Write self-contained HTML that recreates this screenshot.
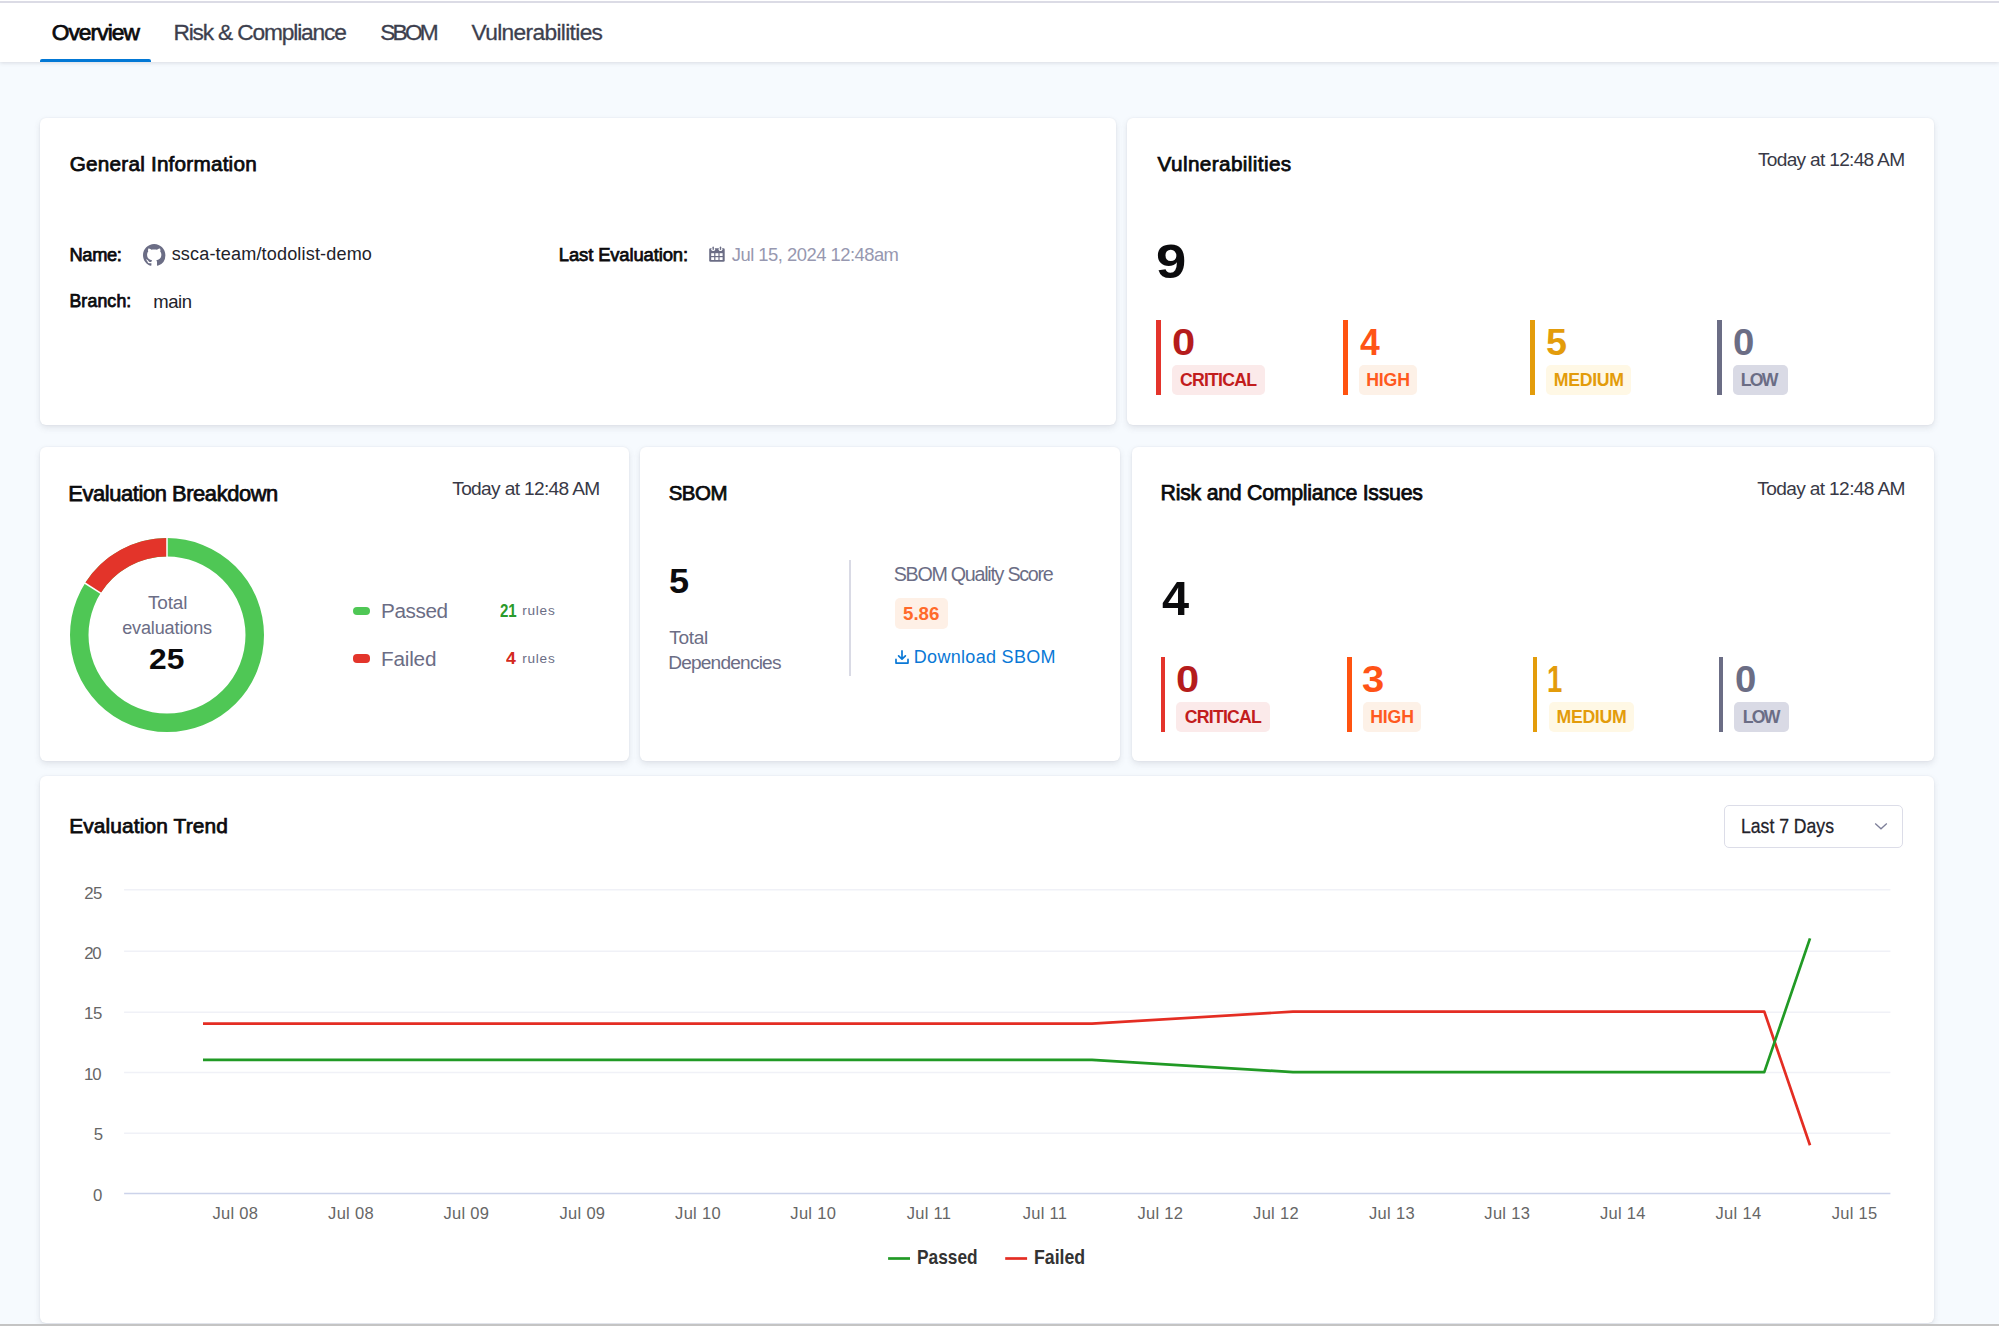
<!DOCTYPE html>
<html><head><meta charset="utf-8">
<style>
html,body{margin:0;padding:0}
body{width:1999px;height:1326px;overflow:hidden;position:relative;background:#f6fafe;font-family:"Liberation Sans",sans-serif}
.t{position:absolute;white-space:pre;line-height:1;font-family:"Liberation Sans",sans-serif}
.card{position:absolute;background:#fff;border-radius:6px;box-shadow:0 0 2px rgba(40,41,61,.08),0 3px 6px rgba(96,97,112,.14)}
.abs{position:absolute}
svg{position:absolute;overflow:visible}
</style></head>
<body>
<div class="abs" style="left:0;top:0;width:1999px;height:62px;background:#fff;box-shadow:0 1px 4px rgba(96,97,112,.2)"></div>
<div class="abs" style="left:0;top:1px;width:1999px;height:2px;background:#dbdbe5"></div>
<div class="abs" style="left:40.3px;top:59px;width:111px;height:3px;background:#0278d5;border-radius:2px 2px 0 0"></div>

<div class="card" style="left:40px;top:118px;width:1076px;height:306.5px"></div>
<div class="card" style="left:1127px;top:118px;width:807px;height:306.5px"></div>
<div class="card" style="left:40px;top:446.5px;width:589px;height:314.5px"></div>
<div class="card" style="left:640px;top:446.5px;width:480px;height:314.5px"></div>
<div class="card" style="left:1132px;top:446.5px;width:802px;height:314.5px"></div>
<div class="card" style="left:40px;top:775.5px;width:1894px;height:547.5px"></div>

<!-- github icon -->
<svg style="left:143.4px;top:243.6px" width="22.4" height="22.4" viewBox="0 0 16 16"><path fill="#6b6d85" d="M8 0C3.58 0 0 3.58 0 8c0 3.54 2.29 6.53 5.47 7.59.4.07.55-.17.55-.38 0-.19-.01-.82-.01-1.49-2.01.37-2.53-.49-2.69-.94-.09-.23-.48-.94-.82-1.13-.28-.15-.68-.52-.01-.53.63-.01 1.08.58 1.23.82.72 1.21 1.87.87 2.33.66.07-.52.28-.87.51-1.07-1.78-.2-3.64-.89-3.64-3.95 0-.87.31-1.59.82-2.15-.08-.2-.36-1.02.08-2.12 0 0 .67-.21 2.2.82.64-.18 1.32-.27 2-.27.68 0 1.36.09 2 .27 1.53-1.04 2.2-.82 2.2-.82.44 1.1.16 1.92.08 2.12.51.56.82 1.27.82 2.15 0 3.07-1.87 3.75-3.65 3.95.29.25.54.73.54 1.48 0 1.07-.01 1.93-.01 2.2 0 .21.15.46.55.38A8.013 8.013 0 0016 8c0-4.42-3.58-8-8-8z"/></svg>

<!-- calendar icon -->
<svg style="left:709.3px;top:246.1px" width="16" height="16" viewBox="0 0 16 16">
<rect x="0.2" y="2.3" width="15.5" height="13.5" rx="1.3" fill="#6b6d85"/>
<circle cx="4.2" cy="3.2" r="1.9" fill="#fff"/><circle cx="11.5" cy="3.2" r="1.9" fill="#fff"/>
<rect x="3.5" y="0.6" width="1.4" height="3.4" rx="0.7" fill="#6b6d85"/><rect x="10.8" y="0.6" width="1.4" height="3.4" rx="0.7" fill="#6b6d85"/>
<rect x="2.2" y="7.2" width="3" height="2.8" fill="#fff"/><rect x="6.4" y="7.2" width="3" height="2.8" fill="#fff"/><rect x="10.6" y="7.2" width="3" height="2.8" fill="#fff"/>
<rect x="2.2" y="11.2" width="3" height="2.8" fill="#fff"/><rect x="6.4" y="11.2" width="3" height="2.8" fill="#fff"/><rect x="10.6" y="11.2" width="3" height="2.8" fill="#fff"/>
</svg>

<!-- donut -->
<svg style="left:0;top:0" width="1999" height="1326">
<circle cx="167" cy="635.1" r="87.75" fill="none" stroke="#4fc755" stroke-width="18.5"/>
<path d="M 92.93 588.08 A 87.75 87.75 0 0 1 167 547.35" fill="none" stroke="#e3342a" stroke-width="18.5"/>
<line x1="167" y1="536.6" x2="167" y2="557.6" stroke="#fff" stroke-width="1.5"/>
<line x1="83.2" y1="582" x2="101" y2="593.3" stroke="#fff" stroke-width="1.5"/>
</svg>

<!-- legend pills -->
<div class="abs" style="left:353.2px;top:607px;width:17.1px;height:8.1px;border-radius:4px;background:#4fc755"></div>
<div class="abs" style="left:353.2px;top:654.4px;width:17.1px;height:8.3px;border-radius:4px;background:#e3352b"></div>

<!-- sbom divider -->
<div class="abs" style="left:849px;top:559.6px;width:1.5px;height:116.3px;background:#d9dae5"></div>
<div class="abs" style="left:895.1px;top:598.3px;width:52.8px;height:30.9px;border-radius:5px;background:#fef0e6"></div>
<svg style="left:895px;top:650px" width="15" height="15" viewBox="0 0 15 15">
<path d="M7 0.9V9M3.6 5.8L7 9.1L10.4 5.8" fill="none" stroke="#0a78d6" stroke-width="1.7" stroke-linecap="round" stroke-linejoin="round"/>
<path d="M1 9.4V13.1H13V9.4" fill="none" stroke="#0a78d6" stroke-width="1.7" stroke-linecap="round" stroke-linejoin="round"/>
</svg>

<!-- dropdown -->
<div class="abs" style="left:1723.5px;top:804.7px;width:177.4px;height:41.1px;border:1.5px solid #dcdde8;border-radius:5px;background:#fff"></div>
<svg style="left:1874px;top:822px" width="14" height="9" viewBox="0 0 14 9"><path d="M1.2 1.5L7 6.8L12.8 1.5" fill="none" stroke="#7d7f99" stroke-width="1.3"/></svg>

<!-- chart -->
<svg style="left:0;top:0" width="1999" height="1326">
<g stroke="#f0f1f7" stroke-width="1.5">
<line x1="124.1" y1="889.7" x2="1890.4" y2="889.7"/>
<line x1="124.1" y1="951.3" x2="1890.4" y2="951.3"/>
<line x1="124.1" y1="1012.3" x2="1890.4" y2="1012.3"/>
<line x1="124.1" y1="1072.5" x2="1890.4" y2="1072.5"/>
<line x1="124.1" y1="1133.3" x2="1890.4" y2="1133.3"/>
</g>
<line x1="124.1" y1="1193.5" x2="1890.4" y2="1193.5" stroke="#ccd3ea" stroke-width="1.5"/>
<polyline points="203,1023.7 1092,1023.7 1293,1011.6 1764.3,1011.6 1810,1145.2" fill="none" stroke="#e42d23" stroke-width="2.7" stroke-linejoin="round"/>
<polyline points="203,1059.9 1092,1059.9 1293,1072.1 1764.3,1072.1 1810,938.4" fill="none" stroke="#219a25" stroke-width="2.7" stroke-linejoin="round"/>
<line x1="888.1" y1="1258.5" x2="910" y2="1258.5" stroke="#219a25" stroke-width="2.7"/>
<line x1="1005.2" y1="1258.5" x2="1027.1" y2="1258.5" stroke="#e42d23" stroke-width="2.7"/>
</svg>

<div class="abs" style="left:0;top:1323.5px;width:1999px;height:2.5px;background:#c4c4c4"></div>

<div style="position:absolute;left:1156.0px;top:320.0px;width:4.5px;height:75px;background:#e4342b"></div>
<div style="position:absolute;left:1171.5px;top:365.0px;width:93.7px;height:30px;background:#fbeaea;border-radius:5px"></div>
<div style="position:absolute;left:1343.0px;top:320.0px;width:4.5px;height:75px;background:#ff5310"></div>
<div style="position:absolute;left:1359.0px;top:365.0px;width:58.0px;height:30px;background:#fdf1e7;border-radius:5px"></div>
<div style="position:absolute;left:1530.2px;top:320.0px;width:4.5px;height:75px;background:#e39c0b"></div>
<div style="position:absolute;left:1546.3px;top:365.0px;width:85.1px;height:30px;background:#fff8e5;border-radius:5px"></div>
<div style="position:absolute;left:1717.0px;top:320.0px;width:4.5px;height:75px;background:#6b6d85"></div>
<div style="position:absolute;left:1732.8px;top:365.0px;width:55.1px;height:30px;background:#d9dae5;border-radius:5px"></div>
<div style="position:absolute;left:1160.5px;top:657.0px;width:4.5px;height:75px;background:#e4342b"></div>
<div style="position:absolute;left:1176.0px;top:702.0px;width:93.7px;height:30px;background:#fbeaea;border-radius:5px"></div>
<div style="position:absolute;left:1347.0px;top:657.0px;width:4.5px;height:75px;background:#ff5310"></div>
<div style="position:absolute;left:1363.0px;top:702.0px;width:58.0px;height:30px;background:#fdf1e7;border-radius:5px"></div>
<div style="position:absolute;left:1532.5px;top:657.0px;width:4.5px;height:75px;background:#e39c0b"></div>
<div style="position:absolute;left:1548.6px;top:702.0px;width:85.1px;height:30px;background:#fff8e5;border-radius:5px"></div>
<div style="position:absolute;left:1718.5px;top:657.0px;width:4.5px;height:75px;background:#6b6d85"></div>
<div style="position:absolute;left:1734.3px;top:702.0px;width:55.1px;height:30px;background:#d9dae5;border-radius:5px"></div>
<span class="t" style="left:51.69px;top:21.49px;font-size:22.73px;font-weight:400;color:#0b0b0d;letter-spacing:-0.927px;-webkit-text-stroke:0.75px #0b0b0d">Overview</span>
<span class="t" style="left:173.38px;top:21.49px;font-size:22.73px;font-weight:400;color:#3d3f4e;letter-spacing:-1.147px;-webkit-text-stroke:0.3px #3d3f4e">Risk &amp; Compliance</span>
<span class="t" style="left:380.26px;top:21.49px;font-size:22.73px;font-weight:400;color:#3d3f4e;letter-spacing:-2.836px;-webkit-text-stroke:0.3px #3d3f4e">SBOM</span>
<span class="t" style="left:471.60px;top:21.49px;font-size:22.73px;font-weight:400;color:#3d3f4e;letter-spacing:-0.658px;-webkit-text-stroke:0.3px #3d3f4e">Vulnerabilities</span>
<span class="t" style="left:69.76px;top:154.29px;font-size:20.72px;font-weight:400;color:#0b0b0d;letter-spacing:0.212px;-webkit-text-stroke:0.75px #0b0b0d">General Information</span>
<span class="t" style="left:69.54px;top:245.96px;font-size:18.27px;font-weight:400;color:#0b0b0d;letter-spacing:-0.375px;-webkit-text-stroke:0.75px #0b0b0d">Name:</span>
<span class="t" style="left:171.66px;top:245.33px;font-size:18.07px;font-weight:400;color:#22222a;letter-spacing:0.159px">ssca-team/todolist-demo</span>
<span class="t" style="left:69.38px;top:293.45px;font-size:17.70px;font-weight:400;color:#0b0b0d;letter-spacing:0.159px;-webkit-text-stroke:0.75px #0b0b0d">Branch:</span>
<span class="t" style="left:153.29px;top:292.77px;font-size:18.50px;font-weight:400;color:#22222a;letter-spacing:-0.442px">main</span>
<span class="t" style="left:558.83px;top:245.64px;font-size:18.42px;font-weight:400;color:#0b0b0d;letter-spacing:-0.120px;-webkit-text-stroke:0.75px #0b0b0d">Last Evaluation:</span>
<span class="t" style="left:731.82px;top:245.64px;font-size:18.42px;font-weight:400;color:#9798b0;letter-spacing:-0.521px">Jul 15, 2024 12:48am</span>
<span class="t" style="left:1157.60px;top:154.49px;font-size:20.72px;font-weight:400;color:#0b0b0d;letter-spacing:0.384px;-webkit-text-stroke:0.75px #0b0b0d">Vulnerabilities</span>
<span class="t" style="left:1757.92px;top:150.03px;font-size:19.14px;font-weight:400;color:#383946;letter-spacing:-0.702px">Today at 12:48 AM</span>
<span class="t" style="left:1155.87px;top:236.58px;font-size:48.78px;font-weight:700;color:#0b0b0d;letter-spacing:0.000px;transform:scaleX(1.1159);transform-origin:0 0">9</span>
<span class="t" style="left:1171.93px;top:324.80px;font-size:36.69px;font-weight:700;color:#b51c1c;letter-spacing:0.000px;transform:scaleX(1.1356);transform-origin:0 0">0</span>
<span class="t" style="left:1179.89px;top:371.75px;font-size:17.70px;font-weight:700;color:#c21d1d;letter-spacing:-0.773px">CRITICAL</span>
<span class="t" style="left:1359.54px;top:324.80px;font-size:36.69px;font-weight:700;color:#ff5316;letter-spacing:0.000px;transform:scaleX(0.9688);transform-origin:0 0">4</span>
<span class="t" style="left:1366.14px;top:371.75px;font-size:17.70px;font-weight:700;color:#ff5a1f;letter-spacing:-0.140px">HIGH</span>
<span class="t" style="left:1545.87px;top:324.80px;font-size:36.69px;font-weight:700;color:#e39c0b;letter-spacing:0.000px;transform:scaleX(1.0282);transform-origin:0 0">5</span>
<span class="t" style="left:1553.74px;top:371.75px;font-size:17.70px;font-weight:700;color:#e39c0b;letter-spacing:-0.291px">MEDIUM</span>
<span class="t" style="left:1732.76px;top:324.80px;font-size:36.69px;font-weight:700;color:#6b6d85;letter-spacing:0.000px;transform:scaleX(1.0461);transform-origin:0 0">0</span>
<span class="t" style="left:1740.74px;top:371.75px;font-size:17.70px;font-weight:700;color:#6b6d85;letter-spacing:-1.737px">LOW</span>
<span class="t" style="left:1176.03px;top:661.80px;font-size:36.69px;font-weight:700;color:#b51c1c;letter-spacing:0.000px;transform:scaleX(1.1356);transform-origin:0 0">0</span>
<span class="t" style="left:1184.79px;top:708.75px;font-size:17.70px;font-weight:700;color:#c21d1d;letter-spacing:-0.773px">CRITICAL</span>
<span class="t" style="left:1362.30px;top:661.80px;font-size:36.69px;font-weight:700;color:#ff5316;letter-spacing:0.000px;transform:scaleX(1.0901);transform-origin:0 0">3</span>
<span class="t" style="left:1370.14px;top:708.75px;font-size:17.70px;font-weight:700;color:#ff5a1f;letter-spacing:-0.140px">HIGH</span>
<span class="t" style="left:1547.45px;top:661.80px;font-size:36.69px;font-weight:700;color:#e39c0b;letter-spacing:0.000px;transform:scaleX(0.7477);transform-origin:0 0">1</span>
<span class="t" style="left:1556.44px;top:708.75px;font-size:17.70px;font-weight:700;color:#e39c0b;letter-spacing:-0.291px">MEDIUM</span>
<span class="t" style="left:1734.66px;top:661.80px;font-size:36.69px;font-weight:700;color:#6b6d85;letter-spacing:0.000px;transform:scaleX(1.0461);transform-origin:0 0">0</span>
<span class="t" style="left:1742.64px;top:708.75px;font-size:17.70px;font-weight:700;color:#6b6d85;letter-spacing:-1.737px">LOW</span>
<span class="t" style="left:68.35px;top:482.72px;font-size:21.87px;font-weight:400;color:#0b0b0d;letter-spacing:-0.403px;-webkit-text-stroke:0.75px #0b0b0d">Evaluation Breakdown</span>
<span class="t" style="left:452.22px;top:478.63px;font-size:19.14px;font-weight:400;color:#383946;letter-spacing:-0.652px">Today at 12:48 AM</span>
<span class="t" style="left:148.02px;top:592.75px;font-size:18.99px;font-weight:400;color:#6b6d85;letter-spacing:-0.189px">Total</span>
<span class="t" style="left:122.18px;top:618.53px;font-size:18.07px;font-weight:400;color:#6b6d85;letter-spacing:-0.146px">evaluations</span>
<span class="t" style="left:149.15px;top:643.78px;font-size:29.50px;font-weight:700;color:#0b0b0d;letter-spacing:0.000px;transform:scaleX(1.0763);transform-origin:0 0">25</span>
<span class="t" style="left:381.04px;top:601.29px;font-size:20.72px;font-weight:400;color:#6b6d85;letter-spacing:-0.399px">Passed</span>
<span class="t" style="left:499.75px;top:602.48px;font-size:18.13px;font-weight:700;color:#2a9a2a;letter-spacing:0.000px;transform:scaleX(0.8308);transform-origin:0 0">21</span>
<span class="t" style="left:522.18px;top:604.41px;font-size:13.60px;font-weight:400;color:#6b6d85;letter-spacing:0.762px">rules</span>
<span class="t" style="left:381.04px;top:648.69px;font-size:20.72px;font-weight:400;color:#6b6d85;letter-spacing:-0.211px">Failed</span>
<span class="t" style="left:506.42px;top:650.05px;font-size:16.98px;font-weight:700;color:#d42a20;letter-spacing:0.000px;transform:scaleX(1.0452);transform-origin:0 0">4</span>
<span class="t" style="left:522.18px;top:651.61px;font-size:13.60px;font-weight:400;color:#6b6d85;letter-spacing:0.762px">rules</span>
<span class="t" style="left:668.68px;top:482.74px;font-size:20.43px;font-weight:400;color:#0b0b0d;letter-spacing:-0.472px;-webkit-text-stroke:0.75px #0b0b0d">SBOM</span>
<span class="t" style="left:668.92px;top:562.60px;font-size:35.97px;font-weight:700;color:#0b0b0d;letter-spacing:0.000px;transform:scaleX(1.0042);transform-origin:0 0">5</span>
<span class="t" style="left:669.32px;top:628.43px;font-size:19.14px;font-weight:400;color:#6b6d85;letter-spacing:-0.362px">Total</span>
<span class="t" style="left:668.17px;top:653.13px;font-size:19.14px;font-weight:400;color:#6b6d85;letter-spacing:-0.816px">Dependencies</span>
<span class="t" style="left:893.71px;top:565.04px;font-size:19.71px;font-weight:400;color:#6b6d85;letter-spacing:-1.269px">SBOM Quality Score</span>
<span class="t" style="left:902.94px;top:604.78px;font-size:18.13px;font-weight:700;color:#ff6a2a;letter-spacing:0.000px;transform:scaleX(1.0321);transform-origin:0 0">5.86</span>
<span class="t" style="left:913.76px;top:647.60px;font-size:17.99px;font-weight:400;color:#0a78d6;letter-spacing:0.319px">Download SBOM</span>
<span class="t" style="left:1160.60px;top:482.81px;font-size:21.29px;font-weight:400;color:#0b0b0d;letter-spacing:-0.247px;-webkit-text-stroke:0.75px #0b0b0d">Risk and Compliance Issues</span>
<span class="t" style="left:1757.22px;top:478.63px;font-size:19.14px;font-weight:400;color:#383946;letter-spacing:-0.634px">Today at 12:48 AM</span>
<span class="t" style="left:1161.51px;top:573.69px;font-size:48.06px;font-weight:700;color:#0b0b0d;letter-spacing:0.000px;transform:scaleX(1.0149);transform-origin:0 0">4</span>
<span class="t" style="left:69.23px;top:816.37px;font-size:20.86px;font-weight:400;color:#0b0b0d;letter-spacing:0.136px;-webkit-text-stroke:0.75px #0b0b0d">Evaluation Trend</span>
<span class="t" style="left:1740.69px;top:816.27px;font-size:20.86px;font-weight:400;color:#22222a;letter-spacing:0.000px;transform:scaleX(0.8438);transform-origin:0 0;-webkit-text-stroke:0.3px #22222a">Last 7 Days</span>
<span class="t" style="left:84.26px;top:886.00px;font-size:16.80px;font-weight:400;color:#666666;letter-spacing:-0.636px">25</span>
<span class="t" style="left:84.26px;top:945.50px;font-size:16.80px;font-weight:400;color:#666666;letter-spacing:-1.436px">20</span>
<span class="t" style="left:83.92px;top:1005.60px;font-size:16.80px;font-weight:400;color:#666666;letter-spacing:-0.300px">15</span>
<span class="t" style="left:83.92px;top:1067.00px;font-size:16.80px;font-weight:400;color:#666666;letter-spacing:-1.100px">10</span>
<span class="t" style="left:93.83px;top:1126.90px;font-size:16.80px;font-weight:400;color:#666666;letter-spacing:0.000px">5</span>
<span class="t" style="left:92.93px;top:1188.00px;font-size:16.80px;font-weight:400;color:#666666;letter-spacing:0.000px">0</span>
<span class="t" style="left:212.42px;top:1205.16px;font-size:16.50px;font-weight:400;color:#666666;letter-spacing:0.300px">Jul 08</span>
<span class="t" style="left:328.08px;top:1205.16px;font-size:16.50px;font-weight:400;color:#666666;letter-spacing:0.300px">Jul 08</span>
<span class="t" style="left:443.43px;top:1205.16px;font-size:16.50px;font-weight:400;color:#666666;letter-spacing:0.300px">Jul 09</span>
<span class="t" style="left:559.50px;top:1205.16px;font-size:16.50px;font-weight:400;color:#666666;letter-spacing:0.300px">Jul 09</span>
<span class="t" style="left:675.08px;top:1205.16px;font-size:16.50px;font-weight:400;color:#666666;letter-spacing:0.300px">Jul 10</span>
<span class="t" style="left:790.34px;top:1205.16px;font-size:16.50px;font-weight:400;color:#666666;letter-spacing:0.300px">Jul 10</span>
<span class="t" style="left:906.67px;top:1205.16px;font-size:16.50px;font-weight:400;color:#666666;letter-spacing:0.300px">Jul 11</span>
<span class="t" style="left:1022.73px;top:1205.16px;font-size:16.50px;font-weight:400;color:#666666;letter-spacing:0.300px">Jul 11</span>
<span class="t" style="left:1137.42px;top:1205.16px;font-size:16.50px;font-weight:400;color:#666666;letter-spacing:0.300px">Jul 12</span>
<span class="t" style="left:1253.08px;top:1205.16px;font-size:16.50px;font-weight:400;color:#666666;letter-spacing:0.300px">Jul 12</span>
<span class="t" style="left:1369.06px;top:1205.16px;font-size:16.50px;font-weight:400;color:#666666;letter-spacing:0.300px">Jul 13</span>
<span class="t" style="left:1484.33px;top:1205.16px;font-size:16.50px;font-weight:400;color:#666666;letter-spacing:0.300px">Jul 13</span>
<span class="t" style="left:1599.91px;top:1205.16px;font-size:16.50px;font-weight:400;color:#666666;letter-spacing:0.300px">Jul 14</span>
<span class="t" style="left:1715.57px;top:1205.16px;font-size:16.50px;font-weight:400;color:#666666;letter-spacing:0.300px">Jul 14</span>
<span class="t" style="left:1831.72px;top:1205.16px;font-size:16.50px;font-weight:400;color:#666666;letter-spacing:0.300px">Jul 15</span>
<span class="t" style="left:916.86px;top:1248.49px;font-size:19.42px;font-weight:700;color:#333333;letter-spacing:0.000px;transform:scaleX(0.8912);transform-origin:0 0">Passed</span>
<span class="t" style="left:1033.54px;top:1248.49px;font-size:19.42px;font-weight:700;color:#333333;letter-spacing:0.000px;transform:scaleX(0.9124);transform-origin:0 0">Failed</span>
</body></html>
